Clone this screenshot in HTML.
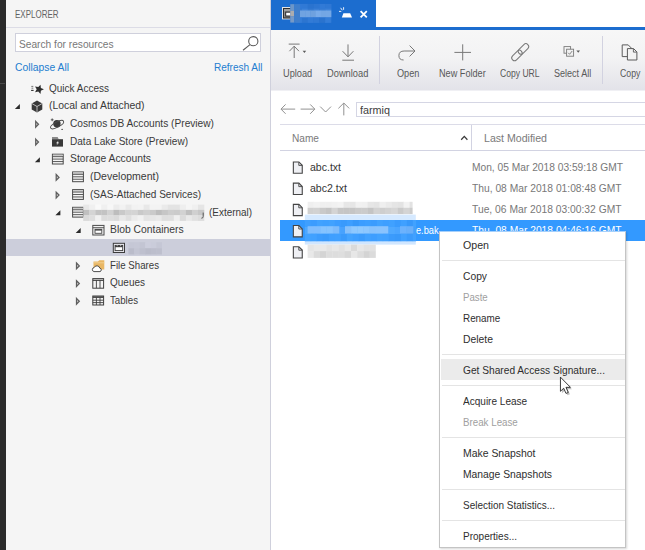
<!DOCTYPE html>
<html><head><meta charset="utf-8"><title>Storage Explorer</title>
<style>
html,body{margin:0;padding:0;}
body{width:645px;height:550px;overflow:hidden;background:#fff;font-family:"Liberation Sans",sans-serif;}
#app{position:relative;width:645px;height:550px;overflow:hidden;background:#fff;}
#app div{position:absolute;box-sizing:border-box;}
.t{position:absolute;transform-origin:0 50%;white-space:pre;line-height:16px;font-family:"Liberation Sans",sans-serif;}
svg{position:absolute;left:0;top:0;overflow:visible;}
#leftbar{left:0;top:0;width:6px;height:550px;background:#2b2b2b;}
#leftbar-line{left:0;top:83px;width:5px;height:1px;background:#4a4a4a;}
#panel{left:6px;top:0;width:264px;height:550px;background:#f5f5f5;}
#panel-border{left:270px;top:0;width:1px;height:550px;background:#cfd0dc;}
#panel-hline{left:6px;top:26.5px;width:264px;height:1px;background:#dcdce6;}
#search{left:15px;top:33px;width:246px;height:19px;background:#fff;border:1px solid #cfd0dc;}
#treesel{left:6px;top:238.6px;width:264px;height:17.1px;background:#cccedb;}
#tab{left:271px;top:0;width:105px;height:28px;background:#1c6dcf;}
#tabline{left:271px;top:27px;width:374px;height:3px;background:#1c6dcf;}
#toolbar{left:271px;top:30px;width:374px;height:59.6px;background:linear-gradient(#f7f7f7 0%,#f3f3f4 45%,#e3e3e9 100%);}
#toolbar-line{left:271px;top:90.2px;width:374px;height:1px;background:#f0f0f4;}
.tsep{top:35.5px;width:1px;height:48.5px;background:#d2d2e0;}
#addr{left:356px;top:102px;width:300px;height:15px;background:#fff;border:1px solid #d5d6e4;}
#hdr-top{left:280px;top:124px;width:365px;height:1px;background:#dcdce8;}
#hdr-bot{left:280px;top:149.5px;width:365px;height:1px;background:#d2d3e2;}
#hdr-sep{left:471px;top:125px;width:1px;height:25px;background:#d2d3e2;}
#rowsel{left:280px;top:220px;width:365px;height:21px;background:#3399ff;}
#menu{left:439px;top:231px;width:187px;height:317px;background:#fff;border:1px solid #c4c4c4;border-top-color:#a6d0fb;box-shadow:1px 1px 2px rgba(0,0,0,0.16);z-index:10;}
#menu .sep{left:1.5px;width:183px;height:1px;background:#e4e4e4;}
#menu .hl{left:1px;top:127.3px;width:183.5px;height:20.8px;background:#ebebeb;}

</style></head>
<body>
<div id="app">
<div id="leftbar"></div><div id="leftbar-line"></div>
<div id="panel"></div><div id="panel-border"></div><div id="panel-hline"></div>
<div id="search"></div>
<div id="treesel"></div>
<div id="tab"></div><div id="tabline"></div>
<div id="toolbar"></div><div id="toolbar-line"></div>
<div class="tsep" style="left:379px"></div><div class="tsep" style="left:601.9px"></div>
<div id="addr"></div>
<div id="hdr-top"></div><div id="hdr-bot"></div><div id="hdr-sep"></div>
<div id="rowsel"></div>
<svg width="645" height="550" viewBox="0 0 645 550"><path d="M19.9 104.1V109.1H14.9Z" fill="#2b2b2b"/>
<path d="M35.7 121.4L38.5 124.3L35.7 127.2Z" fill="#cfcfcf" stroke="#5e5e5e" stroke-width="1.25" stroke-linejoin="miter"/>
<path d="M35.7 139.1L38.5 142.0L35.7 144.9Z" fill="#cfcfcf" stroke="#5e5e5e" stroke-width="1.25" stroke-linejoin="miter"/>
<path d="M39.9 157.2V162.2H34.9Z" fill="#2b2b2b"/>
<path d="M56.2 174.5L59.0 177.4L56.2 180.3Z" fill="#cfcfcf" stroke="#5e5e5e" stroke-width="1.25" stroke-linejoin="miter"/>
<path d="M56.2 192.2L59.0 195.1L56.2 198.0Z" fill="#cfcfcf" stroke="#5e5e5e" stroke-width="1.25" stroke-linejoin="miter"/>
<path d="M60.4 210.3V215.3H55.4Z" fill="#2b2b2b"/>
<path d="M80.7 228.0V233.0H75.7Z" fill="#2b2b2b"/>
<path d="M76.5 263.0L79.3 265.9L76.5 268.8Z" fill="#cfcfcf" stroke="#5e5e5e" stroke-width="1.25" stroke-linejoin="miter"/>
<path d="M76.5 280.7L79.3 283.6L76.5 286.5Z" fill="#cfcfcf" stroke="#5e5e5e" stroke-width="1.25" stroke-linejoin="miter"/>
<path d="M76.5 298.4L79.3 301.3L76.5 304.2Z" fill="#cfcfcf" stroke="#5e5e5e" stroke-width="1.25" stroke-linejoin="miter"/>
<polygon points="40.51,84.64 40.86,87.95 43.90,89.30 40.86,90.65 40.51,93.96 38.29,91.49 35.04,92.18 36.70,89.30 35.04,86.42 38.29,87.11" fill="#2e2e2e"/>
<path d="M31.3 86.4H33.3M31.5 88.2H33.3" stroke="#555" stroke-width="0.8"/><path d="M31.1 90.4H33.6" stroke="#2e2e2e" stroke-width="1.1"/>
<path d="M37.0 100.5L42.3 103.5V109.5L37.0 112.5L31.7 109.5V103.5Z" fill="#383838"/>
<path d="M32.0 103.6L37.0 106.5L42.0 103.6M37.0 106.5V112.3" stroke="#e2e2e2" stroke-width="0.75" fill="none"/>
<circle cx="56.9" cy="123.8" r="3.7" fill="#3a3a3a"/>
<ellipse cx="57.1" cy="124.6" rx="7.3" ry="2.6" transform="rotate(-28 57.1 124.6)" fill="none" stroke="#4a4a4a" stroke-width="0.9"/>
<path d="M52.2 118.4V121.2M50.8 119.8H53.6" stroke="#3a3a3a" stroke-width="0.8"/>
<circle cx="62.1" cy="129.4" r="0.7" fill="#3a3a3a"/>
<path d="M52 136.9H57.6L58.8 139.3H52Z" fill="#8a8a8a"/>
<rect x="52" y="139.2" width="11" height="7.4" fill="#383838"/>
<path d="M58.6 140.5L56 143.3H57.6L56.4 145.5L59.2 142.5H57.7Z" fill="#f4f4f4"/>
<rect x="52.4" y="154.2" width="10.8" height="9.8" fill="#f4f4f4" stroke="#4a4a4a" stroke-width="1"/><rect x="52.9" y="154.7" width="9.8" height="1.6" fill="#c9c9c9"/><path d="M52.4 156.65H63.2" stroke="#4a4a4a" stroke-width="0.9"/><path d="M52.4 159.10H63.2" stroke="#4a4a4a" stroke-width="0.9"/><path d="M52.4 161.55H63.2" stroke="#4a4a4a" stroke-width="0.9"/>
<rect x="72.6" y="171.9" width="10.8" height="9.8" fill="#f4f4f4" stroke="#4a4a4a" stroke-width="1"/><rect x="73.1" y="172.4" width="9.8" height="1.6" fill="#c9c9c9"/><path d="M72.6 174.35H83.4" stroke="#4a4a4a" stroke-width="0.9"/><path d="M72.6 176.80H83.4" stroke="#4a4a4a" stroke-width="0.9"/><path d="M72.6 179.25H83.4" stroke="#4a4a4a" stroke-width="0.9"/>
<rect x="72.6" y="189.6" width="10.8" height="9.8" fill="#f4f4f4" stroke="#4a4a4a" stroke-width="1"/><rect x="73.1" y="190.1" width="9.8" height="1.6" fill="#c9c9c9"/><path d="M72.6 192.05H83.4" stroke="#4a4a4a" stroke-width="0.9"/><path d="M72.6 194.50H83.4" stroke="#4a4a4a" stroke-width="0.9"/><path d="M72.6 196.95H83.4" stroke="#4a4a4a" stroke-width="0.9"/>
<rect x="72.6" y="207.3" width="10.8" height="9.8" fill="#f4f4f4" stroke="#4a4a4a" stroke-width="1"/><rect x="73.1" y="207.8" width="9.8" height="1.6" fill="#c9c9c9"/><path d="M72.6 209.75H83.4" stroke="#4a4a4a" stroke-width="0.9"/><path d="M72.6 212.20H83.4" stroke="#4a4a4a" stroke-width="0.9"/><path d="M72.6 214.65H83.4" stroke="#4a4a4a" stroke-width="0.9"/>
<rect x="92.8" y="225.4" width="11.2" height="9.6" fill="#f4f4f4" stroke="#4a4a4a"/>
<path d="M92.8 227.7H104.0" stroke="#4a4a4a" stroke-width="0.9"/>
<rect x="95.0" y="229.3" width="6.8" height="4" fill="#fff" stroke="#4a4a4a" stroke-width="0.9"/>
<rect x="95.0" y="229.1" width="6.8" height="1.5" fill="#4a4a4a"/>
<rect x="113.3" y="243.3" width="11.2" height="9.2" fill="#e8e8ee" stroke="#3c3c3c"/>
<rect x="115.1" y="245.4" width="7.6" height="5.2" fill="#fff" stroke="#3c3c3c" stroke-width="0.9"/>
<rect x="115.1" y="245.2" width="7.6" height="2.0" fill="#3c3c3c"/>
<path d="M117.2 245.0V246.2M120.6 245.0V246.2" stroke="#ddd" stroke-width="0.7"/>
<path d="M93.5 261.6L97.9 261.6L99.3 260.2H104.3V269.4H93.5Z" fill="#e9b764"/>
<path d="M93.5 262.8H104.3" stroke="#f3d49a" stroke-width="0.8"/>
<path d="M93.9 271.6a2.1 2.1 0 0 1 0.3 -4.1a3.0 3.0 0 0 1 5.6 0.6a1.8 1.8 0 0 1 0.2 3.5Z" fill="#fff" stroke="#3a3a3a" stroke-width="0.9"/>
<rect x="92.8" y="278.6" width="10.8" height="9.6" fill="#f4f4f4" stroke="#3f3f3f"/>
<path d="M92.8 280.3H103.6" stroke="#3f3f3f" stroke-width="1.2"/>
<path d="M96.4 280.1V288.1M100.0 280.1V288.1" stroke="#3f3f3f" stroke-width="0.9"/>
<rect x="92.8" y="296.0" width="10.8" height="9.0" fill="#f4f4f4" stroke="#3f3f3f"/>
<path d="M92.8 297.1H103.6" stroke="#3f3f3f" stroke-width="1.6"/>
<path d="M92.8 300.2H103.6M92.8 302.6H103.6M96.4 297.5V305.0M100.0 297.5V305.0" stroke="#3f3f3f" stroke-width="0.9"/>
<circle cx="253.3" cy="41.2" r="4.6" fill="none" stroke="#5a5a5a" stroke-width="1.1"/><path d="M250 44.6L243 50.2" stroke="#5a5a5a" stroke-width="1.1"/></svg><svg width="645" height="550" viewBox="0 0 645 550"><rect x="282" y="7" width="10" height="12.4" fill="#e6e6e6"/>
<rect x="283" y="8" width="9" height="10.4" fill="#8c8c8c"/>
<rect x="283.5" y="8.5" width="9" height="9.4" fill="none" stroke="#303030" stroke-width="1"/>
<path d="M284 10H292" stroke="#c4c4c4" stroke-width="0.8"/>
<rect x="285.2" y="11.6" width="7" height="5" fill="#2e2e2e"/>
<rect x="286.2" y="12.7" width="6" height="2.8" fill="#fff"/>
<rect x="290.3" y="3.9" width="6.1" height="5.0" fill="rgb(43,116,208)"/><rect x="296.1" y="3.9" width="6.1" height="5.0" fill="rgb(49,122,214)"/><rect x="301.9" y="3.9" width="6.1" height="5.0" fill="rgb(48,121,213)"/><rect x="307.7" y="3.9" width="6.1" height="5.0" fill="rgb(42,115,207)"/><rect x="313.5" y="3.9" width="6.1" height="5.0" fill="rgb(45,118,210)"/><rect x="319.3" y="3.9" width="6.1" height="5.0" fill="rgb(49,122,214)"/><rect x="325.1" y="3.9" width="6.1" height="5.0" fill="rgb(47,120,212)"/><rect x="330.9" y="3.9" width="0.4" height="5.0" fill="rgb(50,123,215)"/><rect x="290.3" y="8.6" width="6.1" height="5.0" fill="rgb(62,131,218)"/><rect x="296.1" y="8.6" width="6.1" height="5.0" fill="rgb(54,123,210)"/><rect x="301.9" y="8.6" width="6.1" height="5.0" fill="rgb(62,131,218)"/><rect x="307.7" y="8.6" width="6.1" height="5.0" fill="rgb(53,122,209)"/><rect x="313.5" y="8.6" width="6.1" height="5.0" fill="rgb(60,129,216)"/><rect x="319.3" y="8.6" width="6.1" height="5.0" fill="rgb(57,126,213)"/><rect x="325.1" y="8.6" width="6.1" height="5.0" fill="rgb(61,130,217)"/><rect x="330.9" y="8.6" width="0.4" height="5.0" fill="rgb(56,125,212)"/><rect x="290.3" y="13.2" width="6.1" height="5.0" fill="rgb(58,126,212)"/><rect x="296.1" y="13.2" width="6.1" height="5.0" fill="rgb(62,130,216)"/><rect x="301.9" y="13.2" width="6.1" height="5.0" fill="rgb(63,131,217)"/><rect x="307.7" y="13.2" width="6.1" height="5.0" fill="rgb(63,131,217)"/><rect x="313.5" y="13.2" width="6.1" height="5.0" fill="rgb(62,130,216)"/><rect x="319.3" y="13.2" width="6.1" height="5.0" fill="rgb(61,129,215)"/><rect x="325.1" y="13.2" width="6.1" height="5.0" fill="rgb(65,133,219)"/><rect x="330.9" y="13.2" width="0.4" height="5.0" fill="rgb(57,125,211)"/><rect x="290.3" y="17.9" width="6.1" height="5.0" fill="rgb(45,118,209)"/><rect x="296.1" y="17.9" width="6.1" height="5.0" fill="rgb(52,125,216)"/><rect x="301.9" y="17.9" width="6.1" height="5.0" fill="rgb(44,117,208)"/><rect x="307.7" y="17.9" width="6.1" height="5.0" fill="rgb(50,123,214)"/><rect x="313.5" y="17.9" width="6.1" height="5.0" fill="rgb(48,121,212)"/><rect x="319.3" y="17.9" width="6.1" height="5.0" fill="rgb(42,115,206)"/><rect x="325.1" y="17.9" width="6.1" height="5.0" fill="rgb(52,125,216)"/><rect x="330.9" y="17.9" width="0.4" height="5.0" fill="rgb(43,116,207)"/>
<rect x="300.0" y="10.5" width="5.5" height="6.5" fill="rgb(112,163,225)"/><rect x="305.2" y="10.5" width="5.5" height="6.5" fill="rgb(113,164,226)"/><rect x="310.4" y="10.5" width="5.5" height="6.5" fill="rgb(110,161,223)"/><rect x="315.6" y="10.5" width="5.5" height="6.5" fill="rgb(120,171,233)"/><rect x="320.8" y="10.5" width="5.5" height="6.5" fill="rgb(115,166,228)"/><rect x="326.0" y="10.5" width="5.3" height="6.5" fill="rgb(116,167,229)"/>
<rect x="290.3" y="4.2" width="3.8" height="6.6" fill="#6c96c8"/><rect x="290.3" y="10.8" width="3.8" height="5.6" fill="#acacae"/><rect x="290.3" y="16.4" width="3.8" height="6.1" fill="#7599c6"/>
<rect x="294.1" y="4.2" width="5.9" height="18.3" fill="#3f7ecb"/>
<path d="M343.4 13.3H350.2L352 17.5H341.8Z" fill="#fff"/>
<path d="M339 11.4H341.3M340.6 7.8L342.3 10.2M343.6 7.2V9.8" stroke="#fff" stroke-width="0.9"/>
<path d="M360.6 11.1L366.8 17.3M366.8 11.1L360.6 17.3" stroke="#fff" stroke-width="1.8"/>
<path d="M288.7 44.1H299.6M294.2 46V58M289.4 51.2L294.2 46.2L299 51.2" fill="none" stroke="#787878" stroke-width="1.0"/>
<path d="M302.6 50.8H306.2L304.4 52.9Z" fill="#5a5a5a"/>
<path d="M342.3 60.2H354M348 44.4V56.8M342.6 51.2L348 56.8L353.4 51.2" fill="none" stroke="#787878" stroke-width="1.0"/>
<path d="M414.8 51H404.2Q398.9 51 398.9 55.6Q398.9 60 403.6 60M409.6 45.6L415 51L409.6 56.4" fill="none" stroke="#787878" stroke-width="1.0"/>
<path d="M454.4 52.4H471M462.7 44.3V60.4" fill="none" stroke="#787878" stroke-width="1.0"/>
<g transform="rotate(-45 520.2 52.2)" fill="none" stroke="#787878" stroke-width="1.0"><rect x="509.4" y="49.4" width="12.4" height="5.6" rx="2.8"/><rect x="518.6" y="49.4" width="12.4" height="5.6" rx="2.8"/></g>
<rect x="564" y="46.6" width="6.6" height="6.6" fill="none" stroke="#7a7a7a" stroke-width="0.9"/>
<rect x="566.6" y="49.2" width="7" height="7" fill="#f1f1f1" stroke="#7a7a7a" stroke-width="0.9"/>
<path d="M568.2 52.8L569.6 54.3L572.2 51" fill="none" stroke="#7a7a7a" stroke-width="0.9"/>
<path d="M576.4 50.6H580L578.2 52.7Z" fill="#5a5a5a"/>
<path d="M622.2 44.9H628.2L631.6 48.3V56.6H622.2Z" fill="#f3f3f3" stroke="#5a5a5a" stroke-width="1"/>
<path d="M627.4 48.6H633.6L636.9 51.9V60H627.4Z" fill="#f3f3f3" stroke="#5a5a5a" stroke-width="1"/>
<path d="M633.4 48.8V52.1H636.7" fill="none" stroke="#5a5a5a" stroke-width="0.9"/>
<path d="M281 109.1H295.2M285.6 104.4L281 109.1L285.6 113.8" fill="none" stroke="#929292" stroke-width="1"/>
<path d="M300.6 109.1H314.8M310.2 104.4L314.8 109.1L310.2 113.8" fill="none" stroke="#929292" stroke-width="1"/>
<path d="M320.2 106.6L325.6 112L331 106.6" fill="none" stroke="#929292" stroke-width="1"/>
<path d="M343.8 115.4V103M338.4 108.4L343.8 103L349.2 108.4" fill="none" stroke="#929292" stroke-width="1"/>
<path d="M461.2 139.7L464.3 136.4L467.4 139.7" fill="none" stroke="#3a3a3a" stroke-width="1.25"/>
<rect x="307.6" y="201.8" width="6.3" height="6.3" fill="rgb(239,239,239)"/><rect x="313.6" y="201.8" width="6.3" height="6.3" fill="rgb(242,242,242)"/><rect x="319.6" y="201.8" width="6.3" height="6.3" fill="rgb(239,239,239)"/><rect x="325.6" y="201.8" width="6.3" height="6.3" fill="rgb(239,239,239)"/><rect x="331.6" y="201.8" width="6.3" height="6.3" fill="rgb(241,241,241)"/><rect x="337.6" y="201.8" width="6.3" height="6.3" fill="rgb(243,243,243)"/><rect x="343.6" y="201.8" width="6.3" height="6.3" fill="rgb(231,231,231)"/><rect x="349.6" y="201.8" width="6.3" height="6.3" fill="rgb(230,230,230)"/><rect x="355.6" y="201.8" width="6.3" height="6.3" fill="rgb(241,241,241)"/><rect x="361.6" y="201.8" width="6.3" height="6.3" fill="rgb(240,240,240)"/><rect x="367.6" y="201.8" width="6.3" height="6.3" fill="rgb(230,230,230)"/><rect x="373.6" y="201.8" width="6.3" height="6.3" fill="rgb(228,228,228)"/><rect x="379.6" y="201.8" width="6.3" height="6.3" fill="rgb(239,239,239)"/><rect x="385.6" y="201.8" width="6.3" height="6.3" fill="rgb(234,234,234)"/><rect x="391.6" y="201.8" width="6.3" height="6.3" fill="rgb(229,229,229)"/><rect x="397.6" y="201.8" width="6.3" height="6.3" fill="rgb(227,227,227)"/><rect x="403.6" y="201.8" width="6.3" height="6.3" fill="rgb(242,242,242)"/><rect x="409.6" y="201.8" width="3.0" height="6.3" fill="rgb(226,226,226)"/><rect x="307.6" y="207.8" width="6.3" height="6.3" fill="rgb(208,208,208)"/><rect x="313.6" y="207.8" width="6.3" height="6.3" fill="rgb(210,210,210)"/><rect x="319.6" y="207.8" width="6.3" height="6.3" fill="rgb(201,201,201)"/><rect x="325.6" y="207.8" width="6.3" height="6.3" fill="rgb(196,196,196)"/><rect x="331.6" y="207.8" width="6.3" height="6.3" fill="rgb(212,212,212)"/><rect x="337.6" y="207.8" width="6.3" height="6.3" fill="rgb(198,198,198)"/><rect x="343.6" y="207.8" width="6.3" height="6.3" fill="rgb(197,197,197)"/><rect x="349.6" y="207.8" width="6.3" height="6.3" fill="rgb(197,197,197)"/><rect x="355.6" y="207.8" width="6.3" height="6.3" fill="rgb(202,202,202)"/><rect x="361.6" y="207.8" width="6.3" height="6.3" fill="rgb(203,203,203)"/><rect x="367.6" y="207.8" width="6.3" height="6.3" fill="rgb(196,196,196)"/><rect x="373.6" y="207.8" width="6.3" height="6.3" fill="rgb(210,210,210)"/><rect x="379.6" y="207.8" width="6.3" height="6.3" fill="rgb(206,206,206)"/><rect x="385.6" y="207.8" width="6.3" height="6.3" fill="rgb(210,210,210)"/><rect x="391.6" y="207.8" width="6.3" height="6.3" fill="rgb(214,214,214)"/><rect x="397.6" y="207.8" width="6.3" height="6.3" fill="rgb(202,202,202)"/><rect x="403.6" y="207.8" width="6.3" height="6.3" fill="rgb(212,212,212)"/><rect x="409.6" y="207.8" width="3.0" height="6.3" fill="rgb(203,203,203)"/>
<rect x="304.8" y="214.6" width="111" height="5.6" fill="#d5e9ff"/>
<rect x="304.8" y="241" width="111" height="3.6" fill="#d0e6ff"/>
<rect x="304.8" y="220.0" width="6.3" height="7.3" fill="rgb(62,159,255)"/><rect x="310.8" y="220.0" width="6.3" height="7.3" fill="rgb(59,156,254)"/><rect x="316.8" y="220.0" width="6.3" height="7.3" fill="rgb(65,162,255)"/><rect x="322.8" y="220.0" width="6.3" height="7.3" fill="rgb(63,160,255)"/><rect x="328.8" y="220.0" width="6.3" height="7.3" fill="rgb(65,162,255)"/><rect x="334.8" y="220.0" width="6.3" height="7.3" fill="rgb(60,157,255)"/><rect x="340.8" y="220.0" width="6.3" height="7.3" fill="rgb(57,154,252)"/><rect x="346.8" y="220.0" width="6.3" height="7.3" fill="rgb(61,158,255)"/><rect x="352.8" y="220.0" width="6.3" height="7.3" fill="rgb(55,152,250)"/><rect x="358.8" y="220.0" width="6.3" height="7.3" fill="rgb(60,157,255)"/><rect x="364.8" y="220.0" width="6.3" height="7.3" fill="rgb(62,159,255)"/><rect x="370.8" y="220.0" width="6.3" height="7.3" fill="rgb(59,156,254)"/><rect x="376.8" y="220.0" width="6.3" height="7.3" fill="rgb(65,162,255)"/><rect x="382.8" y="220.0" width="6.3" height="7.3" fill="rgb(62,159,255)"/><rect x="388.8" y="220.0" width="6.3" height="7.3" fill="rgb(64,161,255)"/><rect x="394.8" y="220.0" width="6.3" height="7.3" fill="rgb(58,155,253)"/><rect x="400.8" y="220.0" width="6.3" height="7.3" fill="rgb(63,160,255)"/><rect x="406.8" y="220.0" width="6.3" height="7.3" fill="rgb(55,152,250)"/><rect x="412.8" y="220.0" width="3.3" height="7.3" fill="rgb(65,162,255)"/><rect x="304.8" y="227.0" width="6.3" height="7.3" fill="rgb(78,168,255)"/><rect x="310.8" y="227.0" width="6.3" height="7.3" fill="rgb(71,161,252)"/><rect x="316.8" y="227.0" width="6.3" height="7.3" fill="rgb(76,166,255)"/><rect x="322.8" y="227.0" width="6.3" height="7.3" fill="rgb(74,164,255)"/><rect x="328.8" y="227.0" width="6.3" height="7.3" fill="rgb(71,161,252)"/><rect x="334.8" y="227.0" width="6.3" height="7.3" fill="rgb(74,164,255)"/><rect x="340.8" y="227.0" width="6.3" height="7.3" fill="rgb(72,162,253)"/><rect x="346.8" y="227.0" width="6.3" height="7.3" fill="rgb(69,159,250)"/><rect x="352.8" y="227.0" width="6.3" height="7.3" fill="rgb(78,168,255)"/><rect x="358.8" y="227.0" width="6.3" height="7.3" fill="rgb(72,162,253)"/><rect x="364.8" y="227.0" width="6.3" height="7.3" fill="rgb(70,160,251)"/><rect x="370.8" y="227.0" width="6.3" height="7.3" fill="rgb(77,167,255)"/><rect x="376.8" y="227.0" width="6.3" height="7.3" fill="rgb(79,169,255)"/><rect x="382.8" y="227.0" width="6.3" height="7.3" fill="rgb(74,164,255)"/><rect x="388.8" y="227.0" width="6.3" height="7.3" fill="rgb(79,169,255)"/><rect x="394.8" y="227.0" width="6.3" height="7.3" fill="rgb(75,165,255)"/><rect x="400.8" y="227.0" width="6.3" height="7.3" fill="rgb(70,160,251)"/><rect x="406.8" y="227.0" width="6.3" height="7.3" fill="rgb(69,159,250)"/><rect x="412.8" y="227.0" width="3.3" height="7.3" fill="rgb(69,159,250)"/><rect x="304.8" y="234.0" width="6.3" height="7.3" fill="rgb(67,163,255)"/><rect x="310.8" y="234.0" width="6.3" height="7.3" fill="rgb(65,161,255)"/><rect x="316.8" y="234.0" width="6.3" height="7.3" fill="rgb(60,156,253)"/><rect x="322.8" y="234.0" width="6.3" height="7.3" fill="rgb(58,154,251)"/><rect x="328.8" y="234.0" width="6.3" height="7.3" fill="rgb(63,159,255)"/><rect x="334.8" y="234.0" width="6.3" height="7.3" fill="rgb(64,160,255)"/><rect x="340.8" y="234.0" width="6.3" height="7.3" fill="rgb(58,154,251)"/><rect x="346.8" y="234.0" width="6.3" height="7.3" fill="rgb(67,163,255)"/><rect x="352.8" y="234.0" width="6.3" height="7.3" fill="rgb(63,159,255)"/><rect x="358.8" y="234.0" width="6.3" height="7.3" fill="rgb(59,155,252)"/><rect x="364.8" y="234.0" width="6.3" height="7.3" fill="rgb(65,161,255)"/><rect x="370.8" y="234.0" width="6.3" height="7.3" fill="rgb(62,158,255)"/><rect x="376.8" y="234.0" width="6.3" height="7.3" fill="rgb(66,162,255)"/><rect x="382.8" y="234.0" width="6.3" height="7.3" fill="rgb(65,161,255)"/><rect x="388.8" y="234.0" width="6.3" height="7.3" fill="rgb(59,155,252)"/><rect x="394.8" y="234.0" width="6.3" height="7.3" fill="rgb(57,153,250)"/><rect x="400.8" y="234.0" width="6.3" height="7.3" fill="rgb(65,161,255)"/><rect x="406.8" y="234.0" width="6.3" height="7.3" fill="rgb(59,155,252)"/><rect x="412.8" y="234.0" width="3.3" height="7.3" fill="rgb(65,161,255)"/>
<rect x="307.6" y="226.2" width="6.6" height="7.3" fill="rgb(127,189,254)"/><rect x="313.9" y="226.2" width="6.6" height="7.3" fill="rgb(127,189,254)"/><rect x="320.2" y="226.2" width="6.6" height="7.3" fill="rgb(133,195,255)"/><rect x="326.5" y="226.2" width="6.6" height="7.3" fill="rgb(133,195,255)"/><rect x="332.8" y="226.2" width="6.5" height="7.3" fill="rgb(125,187,252)"/>
<rect x="345.0" y="226.2" width="6.5" height="7.3" fill="rgb(134,192,251)"/><rect x="351.1" y="226.2" width="6.5" height="7.3" fill="rgb(142,200,255)"/><rect x="357.3" y="226.2" width="6.5" height="7.3" fill="rgb(143,201,255)"/><rect x="363.4" y="226.2" width="6.5" height="7.3" fill="rgb(141,199,255)"/><rect x="369.6" y="226.2" width="6.5" height="7.3" fill="rgb(136,194,253)"/><rect x="375.7" y="226.2" width="6.5" height="7.3" fill="rgb(137,195,254)"/><rect x="381.9" y="226.2" width="6.4" height="7.3" fill="rgb(137,195,254)"/>
<rect x="400.0" y="226.2" width="6.8" height="7.3" fill="rgb(108,178,253)"/><rect x="406.5" y="226.2" width="6.8" height="7.3" fill="rgb(105,175,250)"/>
<rect x="307.6" y="244.6" width="6.5" height="6.8" fill="rgb(229,229,229)"/><rect x="313.8" y="244.6" width="6.5" height="6.8" fill="rgb(233,233,233)"/><rect x="320.0" y="244.6" width="6.5" height="6.8" fill="rgb(233,233,233)"/><rect x="326.2" y="244.6" width="6.5" height="6.8" fill="rgb(227,227,227)"/><rect x="332.4" y="244.6" width="6.5" height="6.8" fill="rgb(231,231,231)"/><rect x="338.6" y="244.6" width="6.5" height="6.8" fill="rgb(225,225,225)"/><rect x="344.8" y="244.6" width="6.5" height="6.8" fill="rgb(232,232,232)"/><rect x="351.0" y="244.6" width="6.5" height="6.8" fill="rgb(218,218,218)"/><rect x="357.2" y="244.6" width="6.5" height="6.8" fill="rgb(231,231,231)"/><rect x="363.4" y="244.6" width="6.5" height="6.8" fill="rgb(226,226,226)"/><rect x="369.6" y="244.6" width="6.2" height="6.8" fill="rgb(225,225,225)"/><rect x="307.6" y="251.1" width="6.5" height="6.8" fill="rgb(232,232,232)"/><rect x="313.8" y="251.1" width="6.5" height="6.8" fill="rgb(219,219,219)"/><rect x="320.0" y="251.1" width="6.5" height="6.8" fill="rgb(212,212,212)"/><rect x="326.2" y="251.1" width="6.5" height="6.8" fill="rgb(221,221,221)"/><rect x="332.4" y="251.1" width="6.5" height="6.8" fill="rgb(221,221,221)"/><rect x="338.6" y="251.1" width="6.5" height="6.8" fill="rgb(222,222,222)"/><rect x="344.8" y="251.1" width="6.5" height="6.8" fill="rgb(216,216,216)"/><rect x="351.0" y="251.1" width="6.5" height="6.8" fill="rgb(231,231,231)"/><rect x="357.2" y="251.1" width="6.5" height="6.8" fill="rgb(221,221,221)"/><rect x="363.4" y="251.1" width="6.5" height="6.8" fill="rgb(212,212,212)"/><rect x="369.6" y="251.1" width="6.2" height="6.8" fill="rgb(219,219,219)"/>
<path d="M293.35 161.95H298.90L302.25 165.30V173.25H293.35Z" fill="#eff0f4" stroke="#444" stroke-width="1.1"/><path d="M298.80 162.20V165.40H302.10" fill="none" stroke="#444" stroke-width="0.9"/>
<path d="M293.35 183.15H298.90L302.25 186.50V194.45H293.35Z" fill="#eff0f4" stroke="#444" stroke-width="1.1"/><path d="M298.80 183.40V186.60H302.10" fill="none" stroke="#444" stroke-width="0.9"/>
<path d="M293.35 204.35H298.90L302.25 207.70V215.65H293.35Z" fill="#eff0f4" stroke="#444" stroke-width="1.1"/><path d="M298.80 204.60V207.80H302.10" fill="none" stroke="#444" stroke-width="0.9"/>
<path d="M293.35 225.55H298.90L302.25 228.90V236.85H293.35Z" fill="#eff0f4" stroke="#444" stroke-width="1.1"/><path d="M298.80 225.80V229.00H302.10" fill="none" stroke="#444" stroke-width="0.9"/>
<path d="M293.35 246.75H298.90L302.25 250.10V258.05H293.35Z" fill="#eff0f4" stroke="#444" stroke-width="1.1"/><path d="M298.80 247.00V250.20H302.10" fill="none" stroke="#444" stroke-width="0.9"/></svg>
<svg width="645" height="550" viewBox="0 0 645 550"><rect x="83.2" y="204.6" width="6.3" height="5.6" fill="rgb(232,232,232)"/><rect x="89.2" y="204.6" width="6.3" height="5.6" fill="rgb(240,240,240)"/><rect x="95.3" y="204.6" width="6.3" height="5.6" fill="rgb(249,249,249)"/><rect x="101.3" y="204.6" width="6.3" height="5.6" fill="rgb(240,240,240)"/><rect x="107.4" y="204.6" width="6.3" height="5.6" fill="rgb(247,247,247)"/><rect x="113.4" y="204.6" width="6.3" height="5.6" fill="rgb(236,236,236)"/><rect x="119.4" y="204.6" width="6.3" height="5.6" fill="rgb(242,242,242)"/><rect x="125.5" y="204.6" width="6.3" height="5.6" fill="rgb(233,233,233)"/><rect x="131.5" y="204.6" width="6.3" height="5.6" fill="rgb(242,242,242)"/><rect x="137.6" y="204.6" width="6.3" height="5.6" fill="rgb(243,243,243)"/><rect x="143.6" y="204.6" width="6.3" height="5.6" fill="rgb(232,232,232)"/><rect x="149.6" y="204.6" width="6.3" height="5.6" fill="rgb(243,243,243)"/><rect x="155.7" y="204.6" width="6.3" height="5.6" fill="rgb(243,243,243)"/><rect x="161.7" y="204.6" width="6.3" height="5.6" fill="rgb(234,234,234)"/><rect x="167.8" y="204.6" width="6.3" height="5.6" fill="rgb(227,227,227)"/><rect x="173.8" y="204.6" width="6.3" height="5.6" fill="rgb(227,227,227)"/><rect x="179.8" y="204.6" width="6.3" height="5.6" fill="rgb(238,238,238)"/><rect x="185.9" y="204.6" width="6.3" height="5.6" fill="rgb(245,245,245)"/><rect x="191.9" y="204.6" width="6.3" height="5.6" fill="rgb(240,240,240)"/><rect x="198.0" y="204.6" width="6.3" height="5.6" fill="rgb(229,229,229)"/><rect x="83.2" y="209.9" width="6.3" height="5.6" fill="rgb(192,192,192)"/><rect x="89.2" y="209.9" width="6.3" height="5.6" fill="rgb(212,212,212)"/><rect x="95.3" y="209.9" width="6.3" height="5.6" fill="rgb(195,195,195)"/><rect x="101.3" y="209.9" width="6.3" height="5.6" fill="rgb(195,195,195)"/><rect x="107.4" y="209.9" width="6.3" height="5.6" fill="rgb(210,210,210)"/><rect x="113.4" y="209.9" width="6.3" height="5.6" fill="rgb(189,189,189)"/><rect x="119.4" y="209.9" width="6.3" height="5.6" fill="rgb(201,201,201)"/><rect x="125.5" y="209.9" width="6.3" height="5.6" fill="rgb(211,211,211)"/><rect x="131.5" y="209.9" width="6.3" height="5.6" fill="rgb(212,212,212)"/><rect x="137.6" y="209.9" width="6.3" height="5.6" fill="rgb(201,201,201)"/><rect x="143.6" y="209.9" width="6.3" height="5.6" fill="rgb(207,207,207)"/><rect x="149.6" y="209.9" width="6.3" height="5.6" fill="rgb(202,202,202)"/><rect x="155.7" y="209.9" width="6.3" height="5.6" fill="rgb(189,189,189)"/><rect x="161.7" y="209.9" width="6.3" height="5.6" fill="rgb(198,198,198)"/><rect x="167.8" y="209.9" width="6.3" height="5.6" fill="rgb(205,205,205)"/><rect x="173.8" y="209.9" width="6.3" height="5.6" fill="rgb(203,203,203)"/><rect x="179.8" y="209.9" width="6.3" height="5.6" fill="rgb(210,210,210)"/><rect x="185.9" y="209.9" width="6.3" height="5.6" fill="rgb(191,191,191)"/><rect x="191.9" y="209.9" width="6.3" height="5.6" fill="rgb(208,208,208)"/><rect x="198.0" y="209.9" width="6.3" height="5.6" fill="rgb(199,199,199)"/><rect x="83.2" y="215.3" width="6.3" height="5.6" fill="rgb(218,218,218)"/><rect x="89.2" y="215.3" width="6.3" height="5.6" fill="rgb(222,222,222)"/><rect x="95.3" y="215.3" width="6.3" height="5.6" fill="rgb(241,241,241)"/><rect x="101.3" y="215.3" width="6.3" height="5.6" fill="rgb(220,220,220)"/><rect x="107.4" y="215.3" width="6.3" height="5.6" fill="rgb(221,221,221)"/><rect x="113.4" y="215.3" width="6.3" height="5.6" fill="rgb(218,218,218)"/><rect x="119.4" y="215.3" width="6.3" height="5.6" fill="rgb(232,232,232)"/><rect x="125.5" y="215.3" width="6.3" height="5.6" fill="rgb(223,223,223)"/><rect x="131.5" y="215.3" width="6.3" height="5.6" fill="rgb(235,235,235)"/><rect x="137.6" y="215.3" width="6.3" height="5.6" fill="rgb(241,241,241)"/><rect x="143.6" y="215.3" width="6.3" height="5.6" fill="rgb(228,228,228)"/><rect x="149.6" y="215.3" width="6.3" height="5.6" fill="rgb(230,230,230)"/><rect x="155.7" y="215.3" width="6.3" height="5.6" fill="rgb(233,233,233)"/><rect x="161.7" y="215.3" width="6.3" height="5.6" fill="rgb(222,222,222)"/><rect x="167.8" y="215.3" width="6.3" height="5.6" fill="rgb(223,223,223)"/><rect x="173.8" y="215.3" width="6.3" height="5.6" fill="rgb(239,239,239)"/><rect x="179.8" y="215.3" width="6.3" height="5.6" fill="rgb(219,219,219)"/><rect x="185.9" y="215.3" width="6.3" height="5.6" fill="rgb(233,233,233)"/><rect x="191.9" y="215.3" width="6.3" height="5.6" fill="rgb(225,225,225)"/><rect x="198.0" y="215.3" width="6.3" height="5.6" fill="rgb(220,220,220)"/>
<path d="M203.2 212.6V216.6Q203.2 218.2 201.4 218.2" fill="none" stroke="#555" stroke-width="1"/>
<rect x="128.4" y="242.2" width="5.9" height="6.3" fill="rgb(197,199,213)"/><rect x="134.0" y="242.2" width="5.9" height="6.3" fill="rgb(198,200,214)"/><rect x="139.6" y="242.2" width="5.9" height="6.3" fill="rgb(195,197,211)"/><rect x="145.2" y="242.2" width="5.9" height="6.3" fill="rgb(204,206,220)"/><rect x="150.8" y="242.2" width="5.9" height="6.3" fill="rgb(202,204,218)"/><rect x="156.4" y="242.2" width="5.5" height="6.3" fill="rgb(197,199,213)"/><rect x="128.4" y="248.2" width="5.9" height="6.3" fill="rgb(186,188,202)"/><rect x="134.0" y="248.2" width="5.9" height="6.3" fill="rgb(195,197,211)"/><rect x="139.6" y="248.2" width="5.9" height="6.3" fill="rgb(190,192,206)"/><rect x="145.2" y="248.2" width="5.9" height="6.3" fill="rgb(186,188,202)"/><rect x="150.8" y="248.2" width="5.9" height="6.3" fill="rgb(188,190,204)"/><rect x="156.4" y="248.2" width="5.5" height="6.3" fill="rgb(189,191,205)"/></svg>
<div id="menu">
 <div class="hl"></div>
 <div class="sep" style="top:27.5px"></div>
 <div class="sep" style="top:121.5px"></div>
 <div class="sep" style="top:152.5px"></div>
 <div class="sep" style="top:204.5px"></div>
 <div class="sep" style="top:256.5px"></div>
 <div class="sep" style="top:287.5px"></div>
</div>
<svg width="645" height="550" viewBox="0 0 645 550" style="z-index:30"><g transform="translate(560 376.7) scale(0.88)"><path d="M1.2 1.6V17.8L4.9 14.3L7.5 20.2L10.3 19L7.7 13.2H12.6Z" fill="rgba(0,0,0,0.25)" transform="translate(1 1)"/><path d="M0.5 0.5V16.6L4.2 13.1L6.8 19.0L9.4 17.9L6.8 12.1H11.9Z" fill="#fff" stroke="#222" stroke-width="1" stroke-linejoin="miter"/></g></svg>

<span class="t" style="left:15.0px;top:7.0px;font-size:10px;transform:scaleX(0.7986);color:#626262;">EXPLORER</span>
<span class="t" style="left:18.5px;top:35.6px;font-size:11px;transform:scaleX(0.9255);color:#787878;">Search for resources</span>
<span class="t" style="left:15.4px;top:59.2px;font-size:11px;transform:scaleX(0.9394);color:#237dd0;">Collapse All</span>
<span class="t" style="left:213.5px;top:59.2px;font-size:11px;transform:scaleX(0.9116);color:#237dd0;">Refresh All</span>
<span class="t" style="left:49.0px;top:79.6px;font-size:11px;transform:scaleX(0.9087);color:#3a3a3a;">Quick Access</span>
<span class="t" style="left:49.0px;top:97.3px;font-size:11px;transform:scaleX(0.9464);color:#3a3a3a;">(Local and Attached)</span>
<span class="t" style="left:69.6px;top:115.0px;font-size:11px;transform:scaleX(0.9237);color:#3a3a3a;">Cosmos DB Accounts (Preview)</span>
<span class="t" style="left:69.6px;top:132.7px;font-size:11px;transform:scaleX(0.9147);color:#3a3a3a;">Data Lake Store (Preview)</span>
<span class="t" style="left:69.6px;top:150.4px;font-size:11px;transform:scaleX(0.9393);color:#3a3a3a;">Storage Accounts</span>
<span class="t" style="left:89.8px;top:168.1px;font-size:11px;transform:scaleX(0.9565);color:#3a3a3a;">(Development)</span>
<span class="t" style="left:89.8px;top:185.8px;font-size:11px;transform:scaleX(0.9124);color:#3a3a3a;">(SAS-Attached Services)</span>
<span class="t" style="left:208.8px;top:203.5px;font-size:11px;transform:scaleX(0.9017);color:#3a3a3a;">(External)</span>
<span class="t" style="left:110.0px;top:221.2px;font-size:11px;transform:scaleX(0.9402);color:#3a3a3a;">Blob Containers</span>
<span class="t" style="left:110.0px;top:256.6px;font-size:11px;transform:scaleX(0.8807);color:#3a3a3a;">File Shares</span>
<span class="t" style="left:110.0px;top:274.3px;font-size:11px;transform:scaleX(0.9084);color:#3a3a3a;">Queues</span>
<span class="t" style="left:110.0px;top:292.0px;font-size:11px;transform:scaleX(0.8806);color:#3a3a3a;">Tables</span>
<span class="t" style="left:282.8px;top:66.2px;font-size:10px;transform:scaleX(0.9210);color:#585858;">Upload</span>
<span class="t" style="left:327.3px;top:66.2px;font-size:10px;transform:scaleX(0.9307);color:#585858;">Download</span>
<span class="t" style="left:396.5px;top:66.2px;font-size:10px;transform:scaleX(0.9155);color:#585858;">Open</span>
<span class="t" style="left:439.3px;top:66.2px;font-size:10px;transform:scaleX(0.9132);color:#585858;">New Folder</span>
<span class="t" style="left:500.1px;top:66.2px;font-size:10px;transform:scaleX(0.8582);color:#585858;">Copy URL</span>
<span class="t" style="left:553.8px;top:66.2px;font-size:10px;transform:scaleX(0.9042);color:#585858;">Select All</span>
<span class="t" style="left:619.9px;top:66.2px;font-size:10px;transform:scaleX(0.8733);color:#585858;">Copy</span>
<span class="t" style="left:360.4px;top:102.3px;font-size:11px;transform:scaleX(0.9816);color:#404040;">farmiq</span>
<span class="t" style="left:292.2px;top:130.3px;font-size:11px;transform:scaleX(0.9201);color:#7a7a7a;">Name</span>
<span class="t" style="left:483.8px;top:130.3px;font-size:11px;transform:scaleX(0.9628);color:#7a7a7a;">Last Modified</span>
<span class="t" style="left:310.2px;top:159.2px;font-size:11px;transform:scaleX(0.9566);color:#363636;">abc.txt</span>
<span class="t" style="left:310.2px;top:180.3px;font-size:11px;transform:scaleX(0.9603);color:#363636;">abc2.txt</span>
<span class="t" style="left:472.2px;top:159.0px;font-size:11px;transform:scaleX(0.9283);color:#787878;">Mon, 05 Mar 2018 03:59:18 GMT</span>
<span class="t" style="left:472.2px;top:180.1px;font-size:11px;transform:scaleX(0.9332);color:#787878;">Thu, 08 Mar 2018 01:08:48 GMT</span>
<span class="t" style="left:472.2px;top:201.2px;font-size:11px;transform:scaleX(0.9356);color:#787878;">Tue, 06 Mar 2018 03:00:32 GMT</span>
<span class="t" style="left:472.2px;top:222.3px;font-size:11px;transform:scaleX(0.9332);color:#ffffff;">Thu, 08 Mar 2018 04:46:16 GMT</span>
<span class="t" style="left:415.5px;top:222.3px;font-size:11px;transform:scaleX(0.8358);color:#ffffff;">e.bak</span>
<span class="t" style="left:463.4px;top:237.0px;font-size:11px;transform:scaleX(0.9658);color:#2e2e2e;z-index:20;">Open</span>
<span class="t" style="left:463.4px;top:268.0px;font-size:11px;transform:scaleX(0.9343);color:#2e2e2e;z-index:20;">Copy</span>
<span class="t" style="left:463.4px;top:289.0px;font-size:11px;transform:scaleX(0.8777);color:#a0a0a0;z-index:20;">Paste</span>
<span class="t" style="left:463.4px;top:310.0px;font-size:11px;transform:scaleX(0.8971);color:#2e2e2e;z-index:20;">Rename</span>
<span class="t" style="left:463.4px;top:331.0px;font-size:11px;transform:scaleX(0.9435);color:#2e2e2e;z-index:20;">Delete</span>
<span class="t" style="left:463.4px;top:362.0px;font-size:11px;transform:scaleX(0.9252);color:#2e2e2e;z-index:20;">Get Shared Access Signature...</span>
<span class="t" style="left:463.4px;top:393.0px;font-size:11px;transform:scaleX(0.9129);color:#2e2e2e;z-index:20;">Acquire Lease</span>
<span class="t" style="left:463.4px;top:414.0px;font-size:11px;transform:scaleX(0.8872);color:#a0a0a0;z-index:20;">Break Lease</span>
<span class="t" style="left:463.4px;top:445.0px;font-size:11px;transform:scaleX(0.9485);color:#2e2e2e;z-index:20;">Make Snapshot</span>
<span class="t" style="left:463.4px;top:466.0px;font-size:11px;transform:scaleX(0.9388);color:#2e2e2e;z-index:20;">Manage Snapshots</span>
<span class="t" style="left:463.4px;top:497.0px;font-size:11px;transform:scaleX(0.9064);color:#2e2e2e;z-index:20;">Selection Statistics...</span>
<span class="t" style="left:463.4px;top:528.0px;font-size:11px;transform:scaleX(0.9104);color:#2e2e2e;z-index:20;">Properties...</span>
</div>
</body></html>
